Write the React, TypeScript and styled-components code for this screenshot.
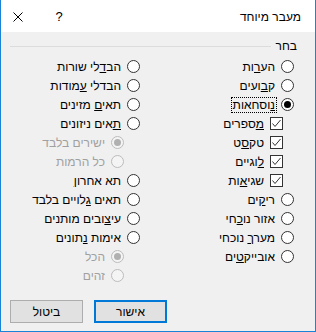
import styled, { createGlobalStyle } from "styled-components";
import type { ReactNode } from "react";

const GlobalStyle = createGlobalStyle`
  html, body {
    margin: 0;
    padding: 0;
    background: #ffffff;
  }
  body {
    font-family: "Liberation Sans", "DejaVu Sans", sans-serif;
    font-size: 12px;
    color: #000000;
  }
`;

const StyledWindow = styled.div`
  direction: rtl;
  width: 316px;
  height: 332px;
  box-sizing: border-box;
  border: 1px solid #1883d7;
  border-top: none;
  display: flex;
  flex-direction: column;
  overflow: hidden;
`;
const StyledTitleBar = styled.div`
  height: 32px;
  flex-shrink: 0;
  background: #ffffff;
  display: flex;
  align-items: center;
  padding: 0 14px 0 12px;
`;
const StyledTitle = styled.div`
  flex: 1;
  font-size: 12px;
  padding-top: 2px;
`;
const StyledHelp = styled.div`
  width: 12px;
  margin-left: 30px;
  font-size: 13px;
  text-align: center;
  padding-top: 1px;
`;
const StyledClose = styled.div`
  width: 10px;
  height: 10px;
  display: flex;
  padding-top: 2px;
`;
const StyledBody = styled.div`
  flex: 1;
  background: #f0f0f0;
  display: flex;
  flex-direction: column;
  padding: 6px 18px 8px 9px;
`;
const StyledGroupHeader = styled.div`
  display: flex;
  align-items: center;
  gap: 5px;
  height: 16px;
`;
const StyledLine = styled.div`
  flex: 1;
  height: 1px;
  background: #dcdcdc;
  margin-top: 1px;
`;
const StyledColumns = styled.div`
  display: grid;
  grid-template-columns: 154px 1fr;
  margin-top: 3px;
  padding-right: 3px;
`;
const StyledColumn = styled.div`
  display: flex;
  flex-direction: column;
`;
const StyledRow = styled.div<{ $indent?: number; $disabled?: boolean }>`
  display: flex;
  align-items: center;
  gap: 4px;
  height: 19px;
  padding-right: ${(p) => p.$indent ?? 0}px;
  color: ${(p) => (p.$disabled ? "#a0a0a0" : "#000000")};
  white-space: nowrap;
`;
const StyledRadio = styled.span<{ $checked?: boolean; $disabled?: boolean }>`
  position: relative;
  width: 13px;
  height: 13px;
  box-sizing: border-box;
  border-radius: 50%;
  flex-shrink: 0;
  border: 1px solid ${(p) => (p.$disabled ? "#bcbcbc" : "#333333")};
  background: ${(p) => (p.$disabled ? "#f4f4f4" : "#ffffff")};
  &::after {
    content: "";
    display: ${(p) => (p.$checked ? "block" : "none")};
    position: absolute;
    left: 2px;
    top: 2px;
    width: 7px;
    height: 7px;
    border-radius: 50%;
    background: ${(p) => (p.$disabled ? "#b0b0b0" : "#000000")};
  }
`;
const StyledCheck = styled.span`
  width: 13px;
  height: 13px;
  box-sizing: border-box;
  flex-shrink: 0;
  border: 1px solid #333333;
  background: #ffffff;
  display: flex;
  align-items: center;
  justify-content: center;
`;
const StyledLabel = styled.span<{ $focus?: boolean }>`
  padding: 0 1px;
  border: 1px dotted ${(p) => (p.$focus ? "#000000" : "transparent")};
  line-height: 14px;
`;
const StyledButtons = styled.div`
  margin-top: auto;
  display: flex;
  justify-content: flex-end;
  gap: 11px;
`;
const StyledButton = styled.button<{ $primary?: boolean }>`
  width: 73px;
  height: 23px;
  box-sizing: border-box;
  background: #e1e1e1;
  border: ${(p) => (p.$primary ? "2px solid #0078d7" : "1px solid #adadad")};
  font-family: "Liberation Sans", "DejaVu Sans", sans-serif;
  font-size: 12px;
  color: #000000;
  padding: 0;
  direction: rtl;
`;

function Option({
  label,
  type = "radio",
  checked,
  disabled,
  indent,
  focus,
}: {
  label: ReactNode;
  type?: "radio" | "check";
  checked?: boolean;
  disabled?: boolean;
  indent?: number;
  focus?: boolean;
}) {
  return (
    <StyledRow $indent={indent} $disabled={disabled}>
      {type === "radio" ? (
        <StyledRadio $checked={checked} $disabled={disabled} />
      ) : (
        <StyledCheck>
          <svg width="11" height="11" viewBox="0 0 11 11">
            <path d="M1.5 5.5 L4 8.5 L9.5 2" fill="none" stroke="#333" strokeWidth="1" />
          </svg>
        </StyledCheck>
      )}
      <StyledLabel $focus={focus}>{label}</StyledLabel>
    </StyledRow>
  );
}

export default function App() {
  return (
    <>
      <GlobalStyle />
      <StyledWindow>
        <StyledTitleBar>
          <StyledTitle>מעבר מיוחד</StyledTitle>
          <StyledHelp>?</StyledHelp>
          <StyledClose>
            <svg width="10" height="10" viewBox="0 0 10 10">
              <path d="M0.5 0.5 L9.5 9.5 M9.5 0.5 L0.5 9.5" stroke="#000" strokeWidth="1" />
            </svg>
          </StyledClose>
        </StyledTitleBar>
        <StyledBody>
          <StyledGroupHeader>
            <span>בחר</span>
            <StyledLine />
          </StyledGroupHeader>
          <StyledColumns>
            <StyledColumn>
              <Option label={<>הע<u>ר</u>ות</>} />
              <Option label={<>ק<u>ב</u>ועים</>} />
              <Option label={<><u>נ</u>וסחאות</>} checked focus />
              <Option type="check" indent={11} label={<><u>מ</u>ספרים</>} />
              <Option type="check" indent={11} label={<>טק<u>ס</u>ט</>} />
              <Option type="check" indent={11} label={<><u>ל</u>וגיים</>} />
              <Option type="check" indent={11} label={<>שגי<u>א</u>ות</>} />
              <Option label={<>רי<u>ק</u>ים</>} />
              <Option label={<>אזור נו<u>כ</u>חי</>} />
              <Option label={<>מער<u>ך</u> נוכחי</>} />
              <Option label={<>אובייק<u>ט</u>ים</>} />
            </StyledColumn>
            <StyledColumn>
              <Option label={<>הב<u>ד</u>לי שורות</>} />
              <Option label={<>הבדלי <u>ע</u>מודות</>} />
              <Option label={<>תאי<u>ם</u> מזינים</>} />
              <Option label={<><u>ת</u>אים ניזונים</>} />
              <Option indent={16} disabled checked label="ישירים בלבד" />
              <Option indent={16} disabled label="כל הרמות" />
              <Option label={<>תא אחרו<u>ן</u></>} />
              <Option label={<>תאים <u>ג</u>לויים בלבד</>} />
              <Option label={<>עי<u>צ</u>ובים מותנים</>} />
              <Option label={<>אימות <u>נ</u>תונים</>} />
              <Option indent={16} disabled checked label="הכל" />
              <Option indent={16} disabled label="זהים" />
            </StyledColumn>
          </StyledColumns>
          <StyledButtons>
            <StyledButton $primary>אישור</StyledButton>
            <StyledButton>ביטול</StyledButton>
          </StyledButtons>
        </StyledBody>
      </StyledWindow>
    </>
  );
}
